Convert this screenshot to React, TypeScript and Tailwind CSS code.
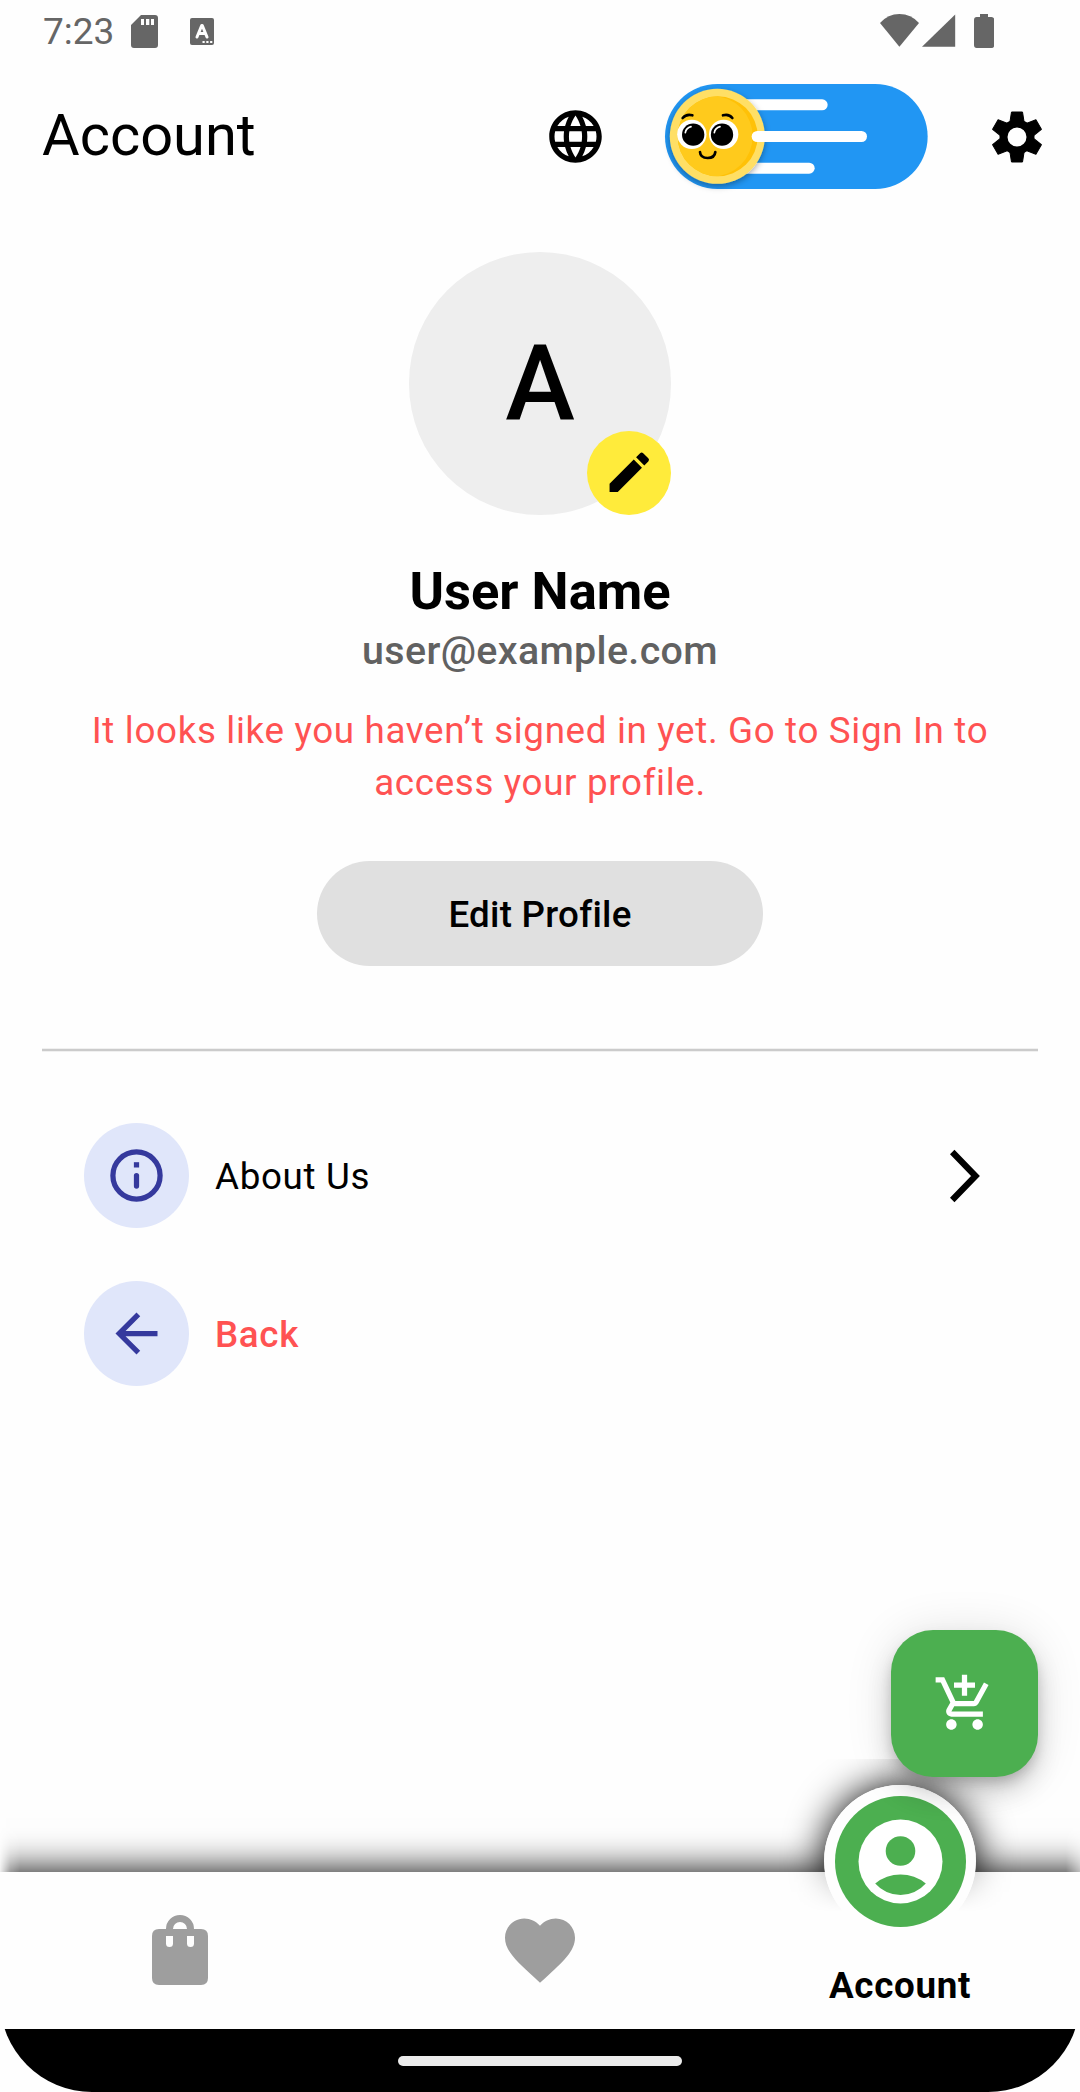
import type { ReactNode } from "react";
import { MdArrowBack, MdEdit, MdFavorite, MdLanguage, MdOutlineAddShoppingCart } from "react-icons/md";

function StatusBar() {
  return (
    <div className="flex h-[63px] items-start justify-between pr-[86px] pl-[43px] text-[#666666]">
      <div className="flex items-start">
        <span className="mt-[8px] w-[88px] text-[37px] leading-[47px]">7:23</span>
        <svg className="mt-[15px] h-[33px] w-[27px]" viewBox="0 0 27 33" fill="currentColor">
          <path
            fillRule="evenodd"
            d="M10 0H24Q27 0 27 3V30Q27 33 24 33H3Q0 33 0 30V10ZM10 4V10H13V4ZM15 4V10H18.300V4ZM20 4V10H23V4Z"
          />
        </svg>
        <div className="relative mt-[18px] ml-[32px] h-[27px] w-[24px] rounded-[2px] bg-[#666666]">
          <svg className="h-full w-full" viewBox="0 0 24 27" fill="none" stroke="#fefefe">
            <path d="M7 19L11.700 7.500H12.300L17 19M9 15.500H15" strokeWidth="3" strokeLinejoin="round" strokeLinecap="round" />
            <path d="M12.500 24H23" strokeWidth="2" strokeDasharray="2.200 1.600" />
          </svg>
        </div>
      </div>
      <svg className="mt-[14px] h-[34px] w-[114px]" viewBox="0 0 114 34" fill="currentColor">
        <path d="M0 9Q8 0 19.400 0Q31 0 39 9L19.400 32.700Z" />
        <path d="M75.200 .5V32.700H42Z" />
        <path d="M100 0H108V3H111.500Q114.200 3 114.200 6V31Q114.200 34 111.500 34H96.700Q94 34 94 31V6Q94 3 96.700 3H100Z" />
      </svg>
    </div>
  );
}

/** Day / night switch with a smiling sun knob. */
function ThemeToggle() {
  return (
    <div className="relative h-[105px] w-[263px]">
      <svg className="h-[105px] w-[263px] overflow-visible" viewBox="46 42 789 315">
        <defs>
          <filter id="knob" x="-30%" y="-30%" width="160%" height="160%">
            <feDropShadow dx="0" dy="7" stdDeviation="9" floodColor="#000" floodOpacity="0.35" />
          </filter>
          <clipPath id="face">
            <circle cx="204" cy="199" r="120" />
          </clipPath>
        </defs>
        <rect x="46" y="42" width="788" height="315" rx="157.500" fill="#2196f3" />
        <rect x="200" y="88" width="334" height="33" rx="16.500" fill="#fff" />
        <rect x="200" y="278" width="295" height="33" rx="16.500" fill="#fff" />
        <circle cx="203" cy="199" r="142.500" fill="#ffdf65" filter="url(#knob)" />
        <circle cx="204" cy="199" r="120" fill="#ffc107" />
        <circle cx="188" cy="199" r="121" fill="#ffca1c" clipPath="url(#face)" />
        <circle cx="126.500" cy="193" r="44" fill="#fff" />
        <circle cx="222" cy="193" r="44" fill="#fff" />
        <circle cx="130.500" cy="194" r="33.500" fill="#000" />
        <circle cx="217" cy="194" r="33.500" fill="#000" />
        <g fill="none" strokeLinecap="round">
          <path d="M107 188Q109 174 124 170M194 188Q196 174 211 170" stroke="#fff" strokeWidth="5" />
          <path d="M99 144Q110 131 128 136M220 136Q238 131 248 144M151 246Q152 264 174 264Q195 264 197 246" stroke="#000" strokeWidth="8" />
        </g>
        <rect x="306" y="183" width="346" height="33" rx="16.500" fill="#fff" />
      </svg>
    </div>
  );
}

function Gear() {
  const angles = [0, 60, 120, 180, 240, 300];
  return (
    <svg className="h-[54px] w-[54px]" viewBox="-27 -27 54 54">
      <path
        fillRule="evenodd"
        d="M0 -17.500A17.500 17.500 0 1 0 0 17.500A17.500 17.500 0 1 0 0 -17.500ZM0 -9.500A9.500 9.500 0 1 1 0 9.500A9.500 9.500 0 1 1 0 -9.500Z"
      />
      {angles.map((a) => (
        <path
          key={a}
          transform={`rotate(${a})`}
          d="M-5.500 -25L5.500 -25L7 -15.500L5 -13.500H-5L-7 -15.500Z"
          stroke="#000"
          strokeWidth="1"
          strokeLinejoin="round"
        />
      ))}
    </svg>
  );
}

function AppBar() {
  return (
    <header className="flex h-[147px] items-center pr-[36px] pl-[42px]">
      <h1 className="relative -top-[2px] flex-1 text-[57.750px] leading-[74px]">Account</h1>
      <MdLanguage className="mr-[58px] size-[63px]" />
      <ThemeToggle />
      <div className="ml-[62px]">
        <Gear />
      </div>
    </header>
  );
}

function MenuRow({ icon, children }: { icon: ReactNode; children: ReactNode }) {
  return (
    <div className="flex h-[105px] items-center">
      <div className="mr-[26px] flex size-[105px] items-center justify-center rounded-full bg-[#e0e6fa] text-[#35399d]">{icon}</div>
      {children}
    </div>
  );
}

function BottomNav() {
  return (
    <nav className="relative h-[157px]">
      {/* glow above the bar */}
      <div className="absolute inset-x-0 -top-[80px] h-[80px] overflow-hidden [mask-image:linear-gradient(to_right,rgba(0,0,0,0.1),rgba(0,0,0,0.75)_10px,#000_20px,#000_1066px,rgba(0,0,0,0.5))]">
        <div className="absolute -inset-x-[80px] top-[80px] h-[157px] shadow-[0_0_36px_#000]" />
      </div>
      <div className="absolute -top-[113px] left-[740px] h-[113px] w-[320px] overflow-hidden">
        <div className="absolute top-[26px] left-[84px] size-[152px] rounded-full shadow-[0_0_38px_#000]" />
      </div>
      <div className="absolute inset-0 bg-[#fefefe]" />
      <div className="absolute top-0 left-[740px] h-[40px] w-[320px] overflow-hidden [mask-image:linear-gradient(#000,transparent)]">
        <div className="absolute -top-[87px] left-[84px] size-[152px] rounded-full shadow-[0_0_36px_rgba(0,0,0,0.28)]" />
      </div>

      <div className="relative grid h-full grid-cols-3">
        <div className="flex justify-center pt-[43px]">
          <svg className="h-[70px] w-[56px]" viewBox="0 0 56 70" fill="#9e9e9e">
            <path
              fillRule="evenodd"
              d="M7 14H14A14 14 0 0 1 42 14H49Q56 14 56 21V63Q56 70 49 70H7Q0 70 0 63V21Q0 14 7 14ZM21 14H35A7 7 0 0 0 21 14ZM14 21V28.500A3.500 3.500 0 0 0 21 28.500V21ZM35 21V28.500A3.500 3.500 0 0 0 42 28.500V21Z"
            />
          </svg>
        </div>
        <div className="flex justify-center pt-[36px]">
          <MdFavorite className="size-[84px] text-[#9e9e9e]" />
        </div>
        <div className="flex flex-col items-center">
          <div className="-mt-[87px] size-[152px] shrink-0 rounded-full bg-[#fefefe] p-[10.500px]">
            <svg className="size-[131px]" viewBox="-65.500 -65.500 131 131">
              <circle r="65.500" fill="#4caf50" />
              <circle r="42" fill="#fff" />
              <circle cy="-10.500" r="14.800" fill="#4caf50" />
              <path d="M-25.300 22A40 40 0 0 1 25.300 22A33.600 33.600 0 0 1 -25.300 22Z" fill="#4caf50" />
            </svg>
          </div>
          <span className="mt-[23px] text-[36.750px] leading-[52px] font-bold tracking-[0.660px]">Account</span>
        </div>
      </div>
    </nav>
  );
}

export default function App() {
  return (
    <div className="h-[2092px] w-[1080px] bg-[#fefefe]">
      <div className="flex h-full flex-col overflow-hidden rounded-b-[92px] bg-[#fefefe] font-['Roboto',sans-serif] text-black">
        <StatusBar />
        <AppBar />

        <main className="flex flex-1 flex-col px-[42px] pt-[42px]">
          <section className="flex flex-col items-center text-center">
            <div className="relative flex size-[262.500px] items-center justify-center rounded-full bg-[#eeeeee]">
              <span className="pt-[3px] text-[105px] leading-[124px] font-medium">A</span>
              <div className="absolute right-0 bottom-0 flex size-[84px] items-center justify-center rounded-full bg-[#ffeb3b]">
                <MdEdit className="size-[52.500px]" />
              </div>
            </div>
            <h2 className="mt-[46.500px] text-[52.500px] leading-[61px] font-bold">User Name</h2>
            <p className="mt-[6px] text-[39.375px] leading-[46px] font-medium tracking-[0.350px] text-[#616161]">user@example.com</p>
            <p className="mt-[31px] w-[960px] text-[36.750px] leading-[52px] tracking-[0.660px] text-[#ff5252]">
              It looks like you haven’t signed in yet. Go to Sign In to
              <br />
              access your profile.
            </p>
            <button className="mt-[52px] h-[105px] w-[446px] rounded-full bg-[#e0e0e0] pt-[2px] text-[36.750px] leading-[52px] font-medium tracking-[0.260px]">
              Edit Profile
            </button>
          </section>

          <div className="mt-[82px] h-[4px] shrink-0 border-y border-[#f0f0f0] bg-[#cbcbcb]" />

          <section className="mt-[71px] flex flex-col gap-[53px] px-[42px]">
            <MenuRow
              icon={
                <svg className="size-[63px]" viewBox="0 0 63 63" fill="none" stroke="currentColor" strokeWidth="5.250">
                  <circle cx="31.500" cy="31.500" r="23.600" />
                  <path d="M31.500 18.200V23.500" />
                  <path d="M31.500 31.500V42" strokeLinecap="round" />
                </svg>
              }
            >
              <span className="flex-1 pt-[2px] text-[36.750px] leading-[52px] tracking-[0.660px]">About Us</span>
              <svg className="mr-[16px] h-[54px] w-[30px]" viewBox="0 0 30 54" fill="none" stroke="#000" strokeWidth="6.300">
                <path d="M2.200 3L25.500 27L2.200 51" />
              </svg>
            </MenuRow>
            <MenuRow icon={<MdArrowBack className="size-[63px]" />}>
              <span className="pt-[2px] text-[36.750px] leading-[52px] font-medium tracking-[0.660px] text-[#ff5252]">Back</span>
            </MenuRow>
          </section>

          <button className="relative z-10 mt-auto mb-[95px] flex size-[147px] items-center justify-center self-end rounded-[42px] bg-[#4caf50] shadow-[0_8px_13px_-3px_rgba(0,0,0,0.2),0_16px_26px_rgba(0,0,0,0.14),0_3px_47px_rgba(0,0,0,0.12)]">
            <MdOutlineAddShoppingCart className="size-[63px] text-white" />
          </button>
        </main>

        <BottomNav />
        <div className="flex h-[63px] justify-center bg-black pt-[27px]">
          <div className="h-[10px] w-[284px] rounded-full bg-[#ebebeb]" />
        </div>
      </div>
    </div>
  );
}
